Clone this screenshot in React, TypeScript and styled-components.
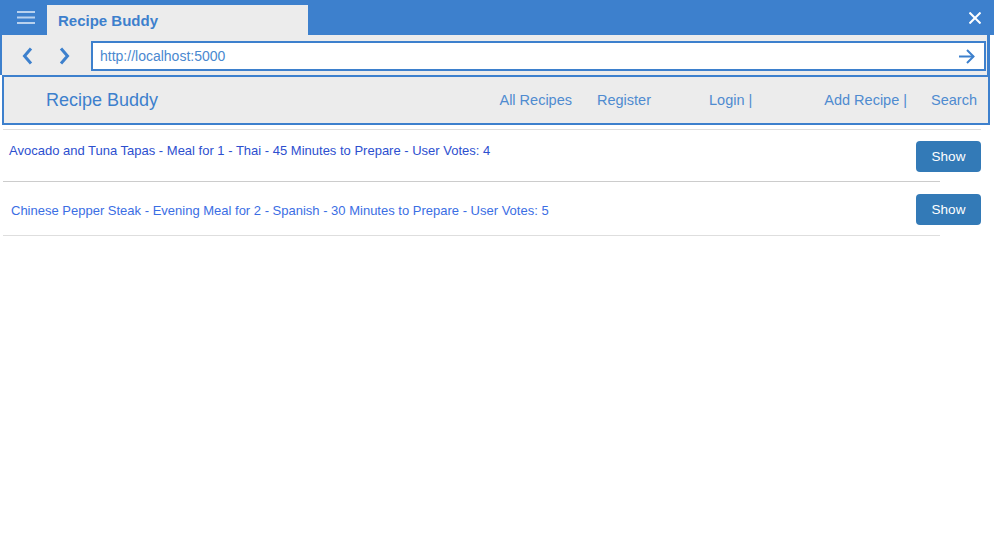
import React from "react";
import styled, { createGlobalStyle } from "styled-components";

const BLUE = "#3d80cd";

const GlobalStyle = createGlobalStyle`
    body {
        margin: 0;
        background: #fff;
        font-family: "Liberation Sans", Arial, sans-serif;
    }
`;

interface Recipe {
    id: string;
    text: string;
    color: string;
    indent: number;
    centered: boolean;
    padTop: number;
    padBottom: number;
}

const recipes: Recipe[] = [
    {
        id: "r1",
        text: "Avocado and Tuna Tapas - Meal for 1 - Thai - 45 Minutes to Prepare - User Votes: 4",
        color: "#2d4fcf",
        indent: 6,
        centered: false,
        padTop: 11,
        padBottom: 9,
    },
    {
        id: "r2",
        text: "Chinese Pepper Steak - Evening Meal for 2 - Spanish - 30 Minutes to Prepare - User Votes: 5",
        color: "#3b6ee4",
        indent: 8,
        centered: true,
        padTop: 12,
        padBottom: 10,
    },
];

const navLinks = [
    { label: "All Recipes", gap: 0 },
    { label: "Register", gap: 25 },
    { label: "Login |", gap: 58 },
    { label: "Add Recipe |", gap: 72 },
    { label: "Search", gap: 24 },
];

const App = () => {
    return (
        <>
            <GlobalStyle />
            <TitleBar>
                <MenuButton>
                    <svg width="18" height="13" viewBox="0 0 18 13">
                        <g stroke="#b9d1ee" strokeWidth="2">
                            <line x1="0" y1="1" x2="18" y2="1" />
                            <line x1="0" y1="6.5" x2="18" y2="6.5" />
                            <line x1="0" y1="12" x2="18" y2="12" />
                        </g>
                    </svg>
                </MenuButton>
                <Tab>Recipe Buddy</Tab>
                <CloseButton>
                    <svg width="12" height="12" viewBox="0 0 12 12">
                        <g stroke="#fff" strokeWidth="2">
                            <line x1="0.5" y1="0.5" x2="11.5" y2="11.5" />
                            <line x1="11.5" y1="0.5" x2="0.5" y2="11.5" />
                        </g>
                    </svg>
                </CloseButton>
            </TitleBar>
            <Frame>
                <Toolbar>
                    <NavArrow>
                        <svg width="12" height="18" viewBox="0 0 12 18">
                            <polyline points="9,1.5 2.5,9 9,16.5" fill="none" stroke={BLUE} strokeWidth="3" />
                        </svg>
                    </NavArrow>
                    <NavArrow>
                        <svg width="12" height="18" viewBox="0 0 12 18">
                            <polyline points="3,1.5 9.5,9 3,16.5" fill="none" stroke={BLUE} strokeWidth="3" />
                        </svg>
                    </NavArrow>
                    <UrlBox>
                        <UrlText>http://localhost:5000</UrlText>
                        <svg width="16" height="15" viewBox="0 0 16 15">
                            <g fill="none" stroke={BLUE} strokeWidth="2">
                                <line x1="0" y1="7.5" x2="14.5" y2="7.5" />
                                <polyline points="8,1 14.5,7.5 8,14" />
                            </g>
                        </svg>
                    </UrlBox>
                </Toolbar>
                <NavBar>
                    <Brand>Recipe Buddy</Brand>
                    <NavLinks>
                        {navLinks.map((l) => (
                            <NavLink key={l.label} $gap={l.gap}>
                                {l.label}
                            </NavLink>
                        ))}
                    </NavLinks>
                </NavBar>
            </Frame>
            <List>
                <Divider $width={978} $color="#dedede" />
                {recipes.map((r, i) => (
                    <React.Fragment key={r.id}>
                        <Row $padTop={r.padTop} $padBottom={r.padBottom} $centered={r.centered}>
                            <RecipeText $color={r.color} $indent={r.indent}>
                                {r.text}
                            </RecipeText>
                            <ShowButton>Show</ShowButton>
                        </Row>
                        <Divider $width={937} $color={i === 0 ? "#cccccc" : "#dedede"} />
                    </React.Fragment>
                ))}
            </List>
        </>
    );
};

export default App;

const TitleBar = styled.div`
    display: flex;
    align-items: flex-end;
    height: 35px;
    background: ${BLUE};
`;

const MenuButton = styled.div`
    display: flex;
    align-items: center;
    justify-content: center;
    width: 47px;
    height: 35px;
    padding-left: 4px;
    box-sizing: border-box;
    align-self: stretch;
`;

const Tab = styled.div`
    width: 261px;
    height: 30px;
    box-sizing: border-box;
    padding-left: 11px;
    display: flex;
    align-items: center;
    background: #ececec;
    color: ${BLUE};
    font-weight: 700;
    font-size: 15px;
`;

const CloseButton = styled.div`
    margin-left: auto;
    margin-right: 13px;
    align-self: center;
    display: flex;
`;

const Frame = styled.div`
    width: 990px;
`;

const Toolbar = styled.div`
    display: flex;
    align-items: flex-start;
    height: 40px;
    box-sizing: border-box;
    padding: 6px 1px 0 0;
    background: #ececec;
    border-left: 2px solid ${BLUE};
    border-right: 3px solid ${BLUE};
`;

const NavArrow = styled.div`
    display: flex;
    align-items: center;
    justify-content: center;
    width: 36px;
    height: 30px;
    &:first-child {
        margin-left: 8px;
    }
    &:nth-child(2) {
        margin-right: 9px;
    }
`;

const UrlBox = styled.div`
    flex: 1;
    height: 30px;
    box-sizing: border-box;
    display: flex;
    align-items: center;
    justify-content: space-between;
    padding: 0 9px 0 7px;
    background: #fff;
    border: 2px solid ${BLUE};
`;

const UrlText = styled.span`
    font-size: 14px;
    color: #4a88cf;
`;

const NavBar = styled.div`
    display: flex;
    align-items: center;
    justify-content: space-between;
    height: 50px;
    margin-left: 2px;
    box-sizing: border-box;
    padding: 0 11px 0 42px;
    background: #ececec;
    border: 2px solid ${BLUE};
`;

const Brand = styled.div`
    font-size: 18px;
    color: ${BLUE};
`;

const NavLinks = styled.div`
    display: flex;
    align-items: center;
`;

const NavLink = styled.span<{ $gap: number }>`
    margin-left: ${(p) => p.$gap}px;
    font-size: 14.5px;
    color: #4f8bd0;
`;

const List = styled.div`
    margin-top: 4px;
    padding-left: 3px;
`;

const Divider = styled.div<{ $width: number; $color: string }>`
    width: ${(p) => p.$width}px;
    height: 1px;
    background: ${(p) => p.$color};
`;

const Row = styled.div<{ $padTop: number; $padBottom: number; $centered: boolean }>`
    display: flex;
    justify-content: space-between;
    align-items: ${(p) => (p.$centered ? "center" : "flex-start")};
    width: 978px;
    padding: ${(p) => p.$padTop}px 0 ${(p) => p.$padBottom}px;
`;

const RecipeText = styled.div<{ $color: string; $indent: number }>`
    padding-left: ${(p) => p.$indent}px;
    padding-top: 2px;
    font-size: 13px;
    line-height: 15px;
    color: ${(p) => p.$color};
`;

const ShowButton = styled.button`
    width: 65px;
    height: 31px;
    border: none;
    border-radius: 4px;
    background: #337ab7;
    color: #fff;
    font-family: "Liberation Sans", Arial, sans-serif;
    font-size: 13.5px;
    cursor: pointer;
`;
